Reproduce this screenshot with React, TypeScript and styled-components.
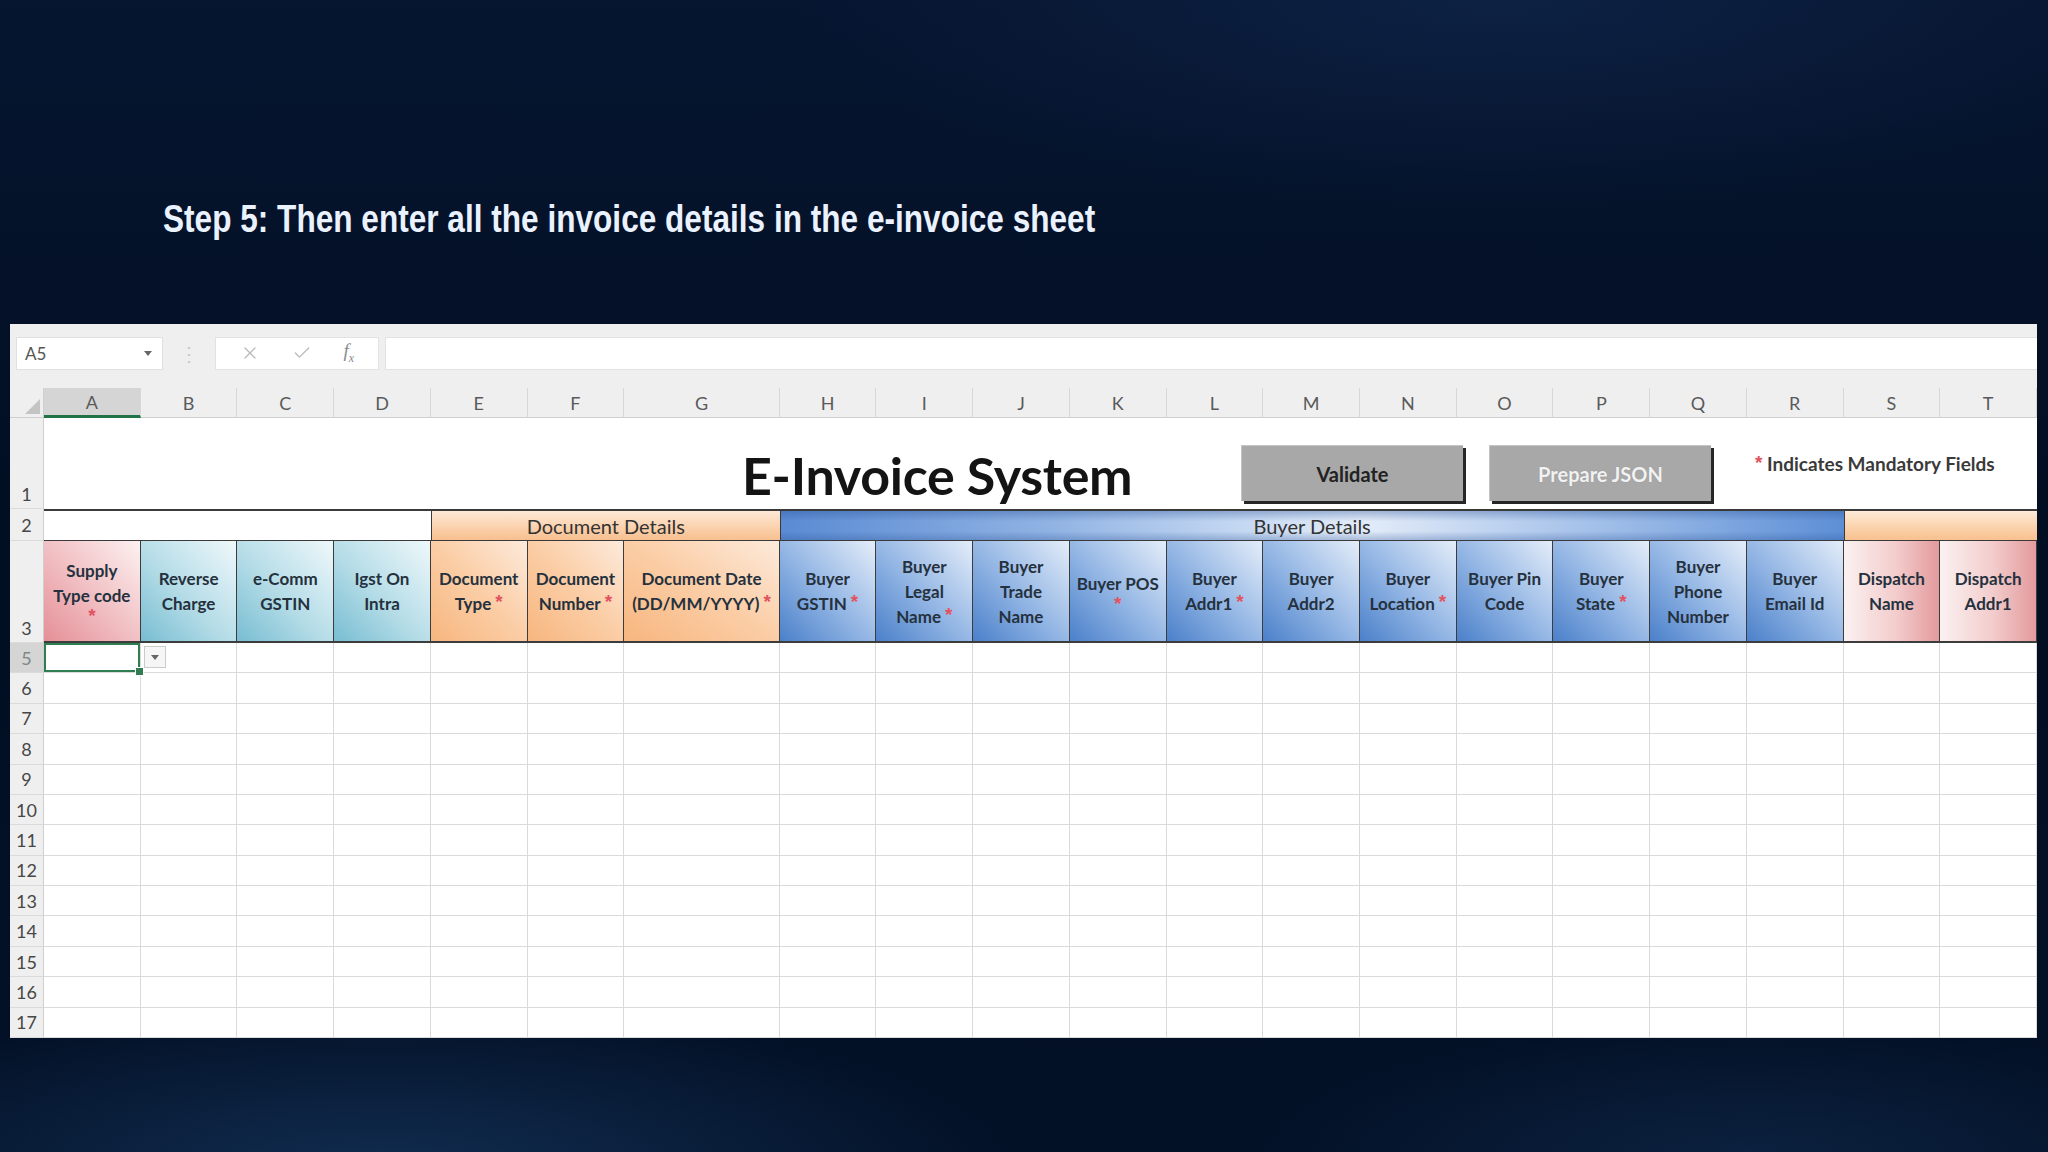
import React from 'react';
import styled, { createGlobalStyle, css } from 'styled-components';
import { X, Check } from 'lucide-react';

type Tone = 'pink' | 'teal' | 'peach' | 'blue' | 'rose';
type Band = 'blank' | 'doc' | 'buyer' | 'disp';

const GlobalStyle = createGlobalStyle`
  html, body { margin: 0; padding: 0; background: #030f25; }
  body { font-family: "Lato", "Liberation Sans", sans-serif; }
  * { box-sizing: border-box; }
`;

const Page = styled.div`
  width: 2048px;
  height: 1152px;
  overflow: hidden;
  display: flex;
  flex-direction: column;
  background:
    radial-gradient(ellipse 900px 240px at 380px 1170px, rgba(34, 78, 130, 0.45), transparent 70%),
    radial-gradient(ellipse 700px 200px at 1750px 1160px, rgba(28, 64, 110, 0.35), transparent 70%),
    radial-gradient(ellipse 1000px 300px at 1500px 0px, rgba(22, 48, 90, 0.45), transparent 70%),
    linear-gradient(180deg, #061530 0%, #020e22 45%, #031127 100%);
`;

// no narrow face installed, so the condensed look comes from a horizontal squeeze
const StepTitle = styled.h1`
  margin: 190px 0 0 163px;
  height: 58px;
  line-height: 58px;
  font-family: "Liberation Sans", Arial, sans-serif;
  font-weight: 700;
  font-size: 39px;
  color: #eaf2ff;
  white-space: nowrap;
  transform: scaleX(0.81);
  transform-origin: left center;
`;

const Sheet = styled.div`
  margin: 76px 0 0 10px;
  width: 2027px;
  height: 714px;
  background: #ffffff;
  display: flex;
  flex-direction: column;
`;

const FormulaBar = styled.div`
  height: 64px;
  flex-shrink: 0;
  background: #efefef;
  display: flex;
  align-items: center;
  padding: 0 0 6px 6px;
`;

const NameBox = styled.div`
  width: 147px;
  height: 33px;
  background: #fff;
  border: 1px solid #e0e0e0;
  display: flex;
  align-items: center;
  justify-content: space-between;
  padding: 0 10px 0 8px;
  font-size: 17px;
  color: #555;
`;

const Caret = styled.span`
  width: 0;
  height: 0;
  border-left: 4px solid transparent;
  border-right: 4px solid transparent;
  border-top: 5px solid #666;
`;

const Grip = styled.div`
  width: 52px;
  text-align: center;
  color: #c9c9c9;
  font-size: 20px;
`;

const FxBox = styled.div`
  width: 164px;
  height: 33px;
  background: #fff;
  border: 1px solid #e2e2e2;
  display: flex;
  align-items: center;
  justify-content: space-around;
  padding: 0 8px;
  color: #b8b8b8;
`;

const Fx = styled.span`
  font-family: "Liberation Serif", serif;
  font-style: italic;
  font-size: 19px;
  color: #8a8a8a;
  sub { font-size: 12px; }
`;

const FormulaInput = styled.div`
  flex: 1;
  height: 33px;
  margin-left: 6px;
  background: #fff;
  border: 1px solid #e2e2e2;
  border-right: none;
`;

const Grid = styled.div`
  flex: 1;
  display: grid;
  grid-template-columns: 34px repeat(6, 1fr) 1.607fr repeat(13, 1fr);
  grid-template-rows: 30px 91px 32px 102px repeat(13, 1fr);
`;

const Corner = styled.div`
  background: #efefef;
  border-right: 1px solid #cfcfcf;
  border-bottom: 1px solid #cfcfcf;
  position: relative;
  &::after {
    content: '';
    position: absolute;
    right: 3px;
    bottom: 3px;
    border-left: 15px solid transparent;
    border-bottom: 15px solid #c4c4c4;
  }
`;

const ColHead = styled.div<{ $active?: boolean }>`
  background: ${p => (p.$active ? '#d5d5d5' : '#efefef')};
  display: flex;
  align-items: center;
  justify-content: center;
  font-size: 18px;
  color: #5a5a5a;
  border-right: 1px solid #d8d8d8;
  border-bottom: ${p => (p.$active ? '3px solid #217346' : '1px solid #cfcfcf')};
`;

const RowHead = styled.div<{ $bottom?: boolean; $active?: boolean }>`
  background: ${p => (p.$active ? '#d5d5d5' : '#efefef')};
  display: flex;
  justify-content: center;
  align-items: ${p => (p.$bottom ? 'flex-end' : 'center')};
  padding-bottom: ${p => (p.$bottom ? '3px' : '0')};
  font-size: 18px;
  color: ${p => (p.$active ? '#7d8a82' : '#474747')};
  border-right: 1px solid #cfcfcf;
  border-bottom: 1px solid #dadada;
`;

const Banner = styled.div`
  grid-column: 2 / -1;
  display: flex;
  align-items: flex-start;
  padding-left: 698px;
  background: #fff;
`;

const SheetTitle = styled.div`
  width: 499px;
  flex-shrink: 0;
  margin-top: 26px;
  font-family: "Lato", "Liberation Sans", sans-serif;
  font-weight: 700;
  font-size: 52px;
  line-height: 62px;
  color: #141414;
  letter-spacing: -0.3px;
`;

const ShapeButton = styled.div<{ $disabled?: boolean }>`
  width: 222px;
  height: 56px;
  margin-top: 27px;
  margin-right: 26px;
  flex-shrink: 0;
  background: #a8a8a8;
  border-top: 1px solid #c4c4c4;
  border-left: 1px solid #c4c4c4;
  box-shadow: 3px 3px 0 #262626;
  display: flex;
  align-items: center;
  justify-content: center;
  font-weight: 700;
  font-size: 20px;
  color: ${p => (p.$disabled ? '#f2f2f2' : '#222')};
  ${p =>
    p.$disabled &&
    css`
      text-shadow: 0 0 1px #8c8c8c;
    `}
`;

const Note = styled.div`
  margin: 34px 0 0 14px;
  font-size: 19px;
  font-weight: 700;
  color: #3a3a3a;
  white-space: nowrap;
`;

const bandBg: Record<Band, string> = {
  blank: '#ffffff',
  doc: 'linear-gradient(180deg, #fde8d6 0%, #fbd2ae 55%, #f7bf8f 100%)',
  buyer:
    'linear-gradient(180deg, rgba(40,80,150,0.35) 0%, rgba(255,255,255,0) 35%, rgba(255,255,255,0) 70%, rgba(40,80,150,0.3) 100%), linear-gradient(90deg, #5a8bd3 0%, #8fb2e3 25%, #d2e1f5 48%, #e2ebf8 55%, #a7c3ea 75%, #5d8fd6 100%)',
  disp: 'linear-gradient(180deg, #fdebd9 0%, #fbd3ad 55%, #f8c08f 100%)',
};

const BandCell = styled.div<{ $band: Band; $span: number }>`
  grid-column: span ${p => p.$span};
  background: ${p => bandBg[p.$band]};
  border-top: 2px solid #3a3a3a;
  border-bottom: 1px solid #3a3a3a;
  border-left: ${p => (p.$band === 'blank' ? 'none' : '1px solid #3a3a3a')};
  display: flex;
  align-items: center;
  justify-content: center;
  font-size: 20px;
  color: #333;
`;

const headBg: Record<Tone, string> = {
  pink: 'linear-gradient(to top right, #e58f97 0%, #f0bcc0 45%, #fdf1f1 100%)',
  teal: 'linear-gradient(to top right, #78bdd2 0%, #b4dce7 45%, #eff8fb 100%)',
  peach: 'linear-gradient(to top right, #f7b67f 0%, #fbcda5 50%, #fdeadb 100%)',
  blue: 'linear-gradient(to top right, #4b80ca 0%, #8fb3e3 45%, #e4edf9 100%)',
  rose: 'linear-gradient(to right, #fbf1f1 0%, #f3cccc 55%, #e39a9d 100%)',
};

const HeadCell = styled.div<{ $tone: Tone }>`
  background: ${p => headBg[p.$tone]};
  border-right: 1px solid #3c3c3c;
  border-bottom: 2px solid #3c3c3c;
  display: flex;
  flex-direction: column;
  align-items: center;
  justify-content: center;
  text-align: center;
  font-weight: 700;
  font-size: 17px;
  line-height: 25px;
  color: #25313d;
  white-space: nowrap;
  overflow: hidden;
`;

const Star = styled.span<{ $solo?: boolean }>`
  color: #e2535f;
  font-family: "Liberation Sans", Arial, sans-serif;
  font-size: 19px;
  font-weight: 700;
  line-height: ${p => (p.$solo ? '16px' : 'inherit')};
  margin-left: ${p => (p.$solo ? '0' : '4px')};
  position: relative;
  top: ${p => (p.$solo ? '0' : '-2px')};
`;

const DataCell = styled.div<{ $selected?: boolean }>`
  background: #fff;
  border-right: 1px solid #dadada;
  border-bottom: 1px solid #dadada;
  position: relative;
  ${p =>
    p.$selected &&
    css`
      box-shadow: inset 0 0 0 2px #2f7d50;
      &::after {
        content: '';
        position: absolute;
        right: -4px;
        bottom: -4px;
        width: 7px;
        height: 7px;
        background: #2f7d50;
        border: 1px solid #fff;
        z-index: 2;
      }
    `}
`;

const DropButton = styled.div`
  position: absolute;
  left: 3px;
  top: 3px;
  width: 22px;
  height: 22px;
  background: #f6f6f6;
  border: 1px solid #cbcbcb;
  display: flex;
  align-items: center;
  justify-content: center;
`;

const letters = 'ABCDEFGHIJKLMNOPQRST'.split('');

const headers: [string[], Tone][] = [
  [['Supply', 'Type code', '*'], 'pink'],
  [['Reverse', 'Charge'], 'teal'],
  [['e-Comm', 'GSTIN'], 'teal'],
  [['Igst On', 'Intra'], 'teal'],
  [['Document', 'Type *'], 'peach'],
  [['Document', 'Number *'], 'peach'],
  [['Document Date', '(DD/MM/YYYY) *'], 'peach'],
  [['Buyer', 'GSTIN *'], 'blue'],
  [['Buyer', 'Legal', 'Name *'], 'blue'],
  [['Buyer', 'Trade', 'Name'], 'blue'],
  [['Buyer POS', '*'], 'blue'],
  [['Buyer', 'Addr1 *'], 'blue'],
  [['Buyer', 'Addr2'], 'blue'],
  [['Buyer', 'Location *'], 'blue'],
  [['Buyer Pin', 'Code'], 'blue'],
  [['Buyer', 'State *'], 'blue'],
  [['Buyer', 'Phone', 'Number'], 'blue'],
  [['Buyer', 'Email Id'], 'blue'],
  [['Dispatch', 'Name'], 'rose'],
  [['Dispatch', 'Addr1'], 'rose'],
];

const bodyRows = [5, 6, 7, 8, 9, 10, 11, 12, 13, 14, 15, 16, 17];

function Label({ line }: { line: string }) {
  if (line === '*') return <Star $solo>*</Star>;
  if (line.endsWith(' *'))
    return (
      <div>
        {line.slice(0, -2)}
        <Star>*</Star>
      </div>
    );
  return <div>{line}</div>;
}

export default function App() {
  return (
    <Page>
      <GlobalStyle />
      <StepTitle>Step 5: Then enter all the invoice details in the e-invoice sheet</StepTitle>

      <Sheet>
        <FormulaBar>
          <NameBox>
            A5
            <Caret />
          </NameBox>
          <Grip>⋮</Grip>
          <FxBox>
            <X size={20} strokeWidth={1.5} />
            <Check size={20} strokeWidth={1.5} />
            <Fx>
              f<sub>x</sub>
            </Fx>
          </FxBox>
          <FormulaInput />
        </FormulaBar>

        <Grid>
          <Corner />
          {letters.map(l => (
            <ColHead key={l} $active={l === 'A'}>
              {l}
            </ColHead>
          ))}

          <RowHead $bottom>1</RowHead>
          <Banner>
            <SheetTitle>E-Invoice System</SheetTitle>
            <ShapeButton>Validate</ShapeButton>
            <ShapeButton $disabled>Prepare JSON</ShapeButton>
            <Note>
              <Star>*</Star> Indicates Mandatory Fields
            </Note>
          </Banner>

          <RowHead>2</RowHead>
          <BandCell $band="blank" $span={4} />
          <BandCell $band="doc" $span={3}>Document Details</BandCell>
          <BandCell $band="buyer" $span={11}>Buyer Details</BandCell>
          <BandCell $band="disp" $span={2} />

          <RowHead $bottom>3</RowHead>
          {headers.map(([lines, tone], i) => (
            <HeadCell key={i} $tone={tone}>
              {lines.map((ln, j) => (
                <Label key={j} line={ln} />
              ))}
            </HeadCell>
          ))}

          {bodyRows.map(r => (
            <React.Fragment key={r}>
              <RowHead $active={r === 5}>{r}</RowHead>
              {letters.map(l => (
                <DataCell key={l} $selected={r === 5 && l === 'A'}>
                  {r === 5 && l === 'B' && (
                    <DropButton>
                      <Caret />
                    </DropButton>
                  )}
                </DataCell>
              ))}
            </React.Fragment>
          ))}
        </Grid>
      </Sheet>
    </Page>
  );
}
